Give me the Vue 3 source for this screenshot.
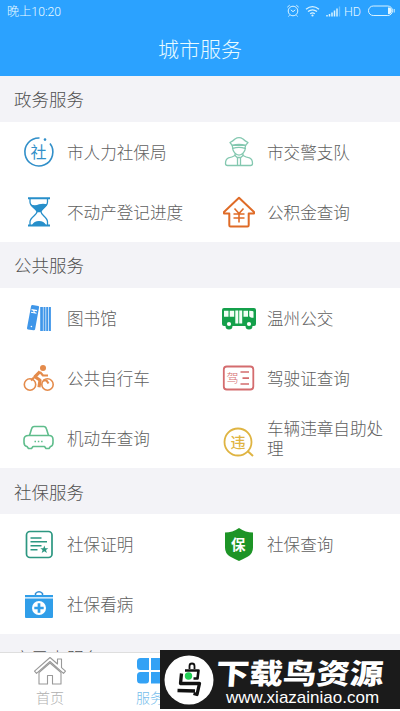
<script setup>
const sections = [
  { title: '政务服务', items: [
    { icon: 'social', label: '市人力社保局' },
    { icon: 'police', label: '市交警支队' },
    { icon: 'hourglass', label: '不动产登记进度' },
    { icon: 'fund', label: '公积金查询' }
  ] },
  { title: '公共服务', items: [
    { icon: 'books', label: '图书馆' },
    { icon: 'bus', label: '温州公交' },
    { icon: 'bike', label: '公共自行车' },
    { icon: 'license', label: '驾驶证查询' },
    { icon: 'car', label: '机动车查询' },
    { icon: 'violation', label: '车辆违章自助处理' }
  ] },
  { title: '社保服务', items: [
    { icon: 'cert', label: '社保证明' },
    { icon: 'shield', label: '社保查询' },
    { icon: 'kit', label: '社保看病' }
  ] },
  { title: '市民卡服务', items: [] }
]
</script>

<template>
  <div class="screen">
    <header class="top">
      <div class="status">
        <span>晚上10:20</span>
        <svg class="status-icons" width="110" height="16" viewBox="0 0 110 16" fill="none" stroke="#d9f3ff">
          <circle cx="7" cy="8" r="4.8" />
          <path d="M4.8 6.8 7 8.7l2.3-1.9M1.3 4.2l2.4-2M12.7 4.2l-2.4-2M3.5 12.3l-1 1.2M10.5 12.3l1 1.2" />
          <path d="M20 6.2q6.5-5.2 13 0M22 8.6q4.500-3.600 9 0M24.200 10.800q2.300-1.800 4.600 0" stroke-width="1.300" />
          <circle cx="26.500" cy="12.500" r="1.100" fill="#d9f3ff" stroke="none" />
          <path d="M41 13.500v-1.500M43.500 13.500v-2.500M46 13.500v-4M48.500 13.500v-6M51 13.500v-8" stroke-width="1.500" />
          <path d="M53.500 13.500v-10" stroke="#6bbfff" stroke-width="1.300" />
          <text x="58" y="12.500" class="hd">HD</text>
          <rect x="82.500" y="3" width="24" height="9.500" rx="4.700" />
          <path d="M102 4.500h1.500q2.300.5 2.300 3.300t-2.300 3.200H102z" fill="#e4f7ff" stroke="none" />
          <path d="M108.200 6v3.500" />
        </svg>
      </div>
      <h1>城市服务</h1>
    </header>

    <main>
      <section v-for="s in sections" :key="s.title">
        <h2>{{ s.title }}</h2>
        <div class="grid">
          <div v-for="it in s.items" :key="it.icon" class="item">
            <svg class="icon" width="40" height="40" viewBox="0 0 40 40" fill="none" stroke-linejoin="round">
              <g v-if="it.icon === 'social'" stroke="#318fc9">
                <path d="M20.500 6A14 14 0 1 0 31 11.500" stroke-width="1.600" />
                <circle cx="26" cy="7.600" r="1.300" fill="#318fc9" stroke="none" />
                <text x="19.500" y="26" class="glyph social">社</text>
              </g>
              <g v-else-if="it.icon === 'police'" stroke="#84c8b0" stroke-width="1.300">
                <path d="M13.200 13.300 11 10.500Q14 9 16 7q4-2.700 8 0 2 2 5 3.500l-2.400 2.800z" />
                <path d="M13.200 13.300q6.800-2 13.400 0l-.6 3q-6-2-12.200 0z" />
                <path d="M13.500 16q.500 3 2 4.600 4.500 5 9 0 1.500-1.600 2-4.600M16 21v3M24 21v3" />
                <path d="M16 23.500q-3 1.700-6.500 2.300Q6.500 27 6.500 31.500q0 2 2 2h23q2 0 2-2 0-4.500-3-5.700-3.500-.6-6.500-2.300M16 23.500l2.200 2h3.600l2.200-2M18.500 25.500v8M21.500 25.500v8" />
              </g>
              <g v-else-if="it.icon === 'hourglass'" stroke="#278fca">
                <path d="M9 6.200h22M9 33.500h22" stroke-width="2" />
                <path d="M11 7v3c0 5 7 6.500 7 9.800s-7 5.500-7 10V33M28.500 7v3c0 5-6.500 6.500-6.500 9.800s6.500 5.500 6.500 10V33" stroke-width="1.300" />
                <path d="M11.500 12.300q4.500 2 8.500 0 4-1.300 8.300 0c-1.300 3.700-6 4.700-6.500 8h-3.600c-.500-3.300-5.500-4.300-6.700-8zM13 33q2-4 7-4t7 4z" fill="#278fca" stroke="none" />
              </g>
              <g v-else-if="it.icon === 'fund'" stroke="#df6b27" stroke-width="2">
                <path d="M20 5.800 35 20v1.500h-5.300V33.300q0 1.200-1.200 1.200h-17q-1.200 0-1.200-1.200V21.500H5V20z" />
                <path d="m15.500 16.500 4.500 5 4.500-5M14.500 22h11M14.500 26h11M20 21.500V30.500" stroke-width="1.600" />
              </g>
              <g v-else-if="it.icon === 'books'" fill="#3f96e9">
                <path d="m13.500 7 5.800.9q1 .3.800 1.300l-4 22q-.3 1.300-1.500 1.100L9 31.400q-1.200-.3-1-1.500l4-21.500q.3-1.500 1.500-1.400zM21.200 9h2.700v24h-2.700zM24.500 9h2v24h-2zM27.200 9h2v24h-2zM29.900 9h2v24h-2z" />
                <path d="m12.500 11.600 5.500 1M12 14.300l5.500 1M14 12l2 3" stroke="#fff" stroke-width="1.100" />
                <circle cx="12.400" cy="28.500" r=".8" fill="#fff" />
              </g>
              <g v-else-if="it.icon === 'bus'">
                <path d="M5 10h30q2 0 2 2v14q0 2-2 2h-1.500a3.500 3.500 0 0 1-7 0h-13a3.500 3.500 0 0 1-7 0H5q-2 0-2-2V12q0-2 2-2z" fill="#14a04b" />
                <path d="M5 12.800h4.500v6H5zM10.700 12.800h4.500v6h-4.500zM24.500 12.800H29v6h-4.500zM30.200 12.800q4 0 4.300 1v6q-4 0-4.300-2zM16.300 12.500h3v13h-3zM20.200 12.500h3v13h-3z" fill="#f3fff7" />
                <circle cx="10" cy="26" r="3.600" fill="#14a04b" /><circle cx="30" cy="26" r="3.600" fill="#14a04b" />
                <circle cx="10" cy="26" r="2.100" fill="#fff" /><circle cx="30" cy="26" r="2.100" fill="#fff" />
              </g>
              <g v-else-if="it.icon === 'bike'" stroke="#e48b4b">
                <circle cx="11" cy="26.500" r="5.700" stroke-width="1.600" /><circle cx="28.500" cy="26.500" r="5.700" stroke-width="1.600" />
                <circle cx="24" cy="10" r="3" fill="#e48b4b" stroke="none" />
                <path d="m21 13.700-5 5 5 3.500-1 7" stroke-width="3.200" />
                <path d="m21 14 3 3.500h5M24 22.500h3.500l2 3M12 22.500l3-3" stroke-width="2.200" />
              </g>
              <g v-else-if="it.icon === 'license'" stroke="#d46c6e">
                <rect x="4.800" y="8.500" width="29.500" height="23" rx="3" stroke-width="1.800" />
                <text x="13.500" y="24.500" class="glyph drive">驾</text>
                <path d="M21.500 14H30M23.500 20.200H30M21.500 26H30" stroke-width="1.700" />
              </g>
              <g v-else-if="it.icon === 'car'" stroke="#5fbd8c" stroke-width="1.600">
                <path d="m10.500 17.500 2-6.500q.700-2.500 2.700-2.500h9.600q2 0 2.700 2.500l2 6.500" />
                <path d="M9.500 17.500h20.500q4 0 4 4v3q0 3.500-2.500 4l-1.500 2h-3l-1.500-2H14l-1.500 2h-3l-1.500-2Q5 28 5 24.500v-3q0-4 4.500-4z" />
                <path d="M15.500 23.500H17M18.800 23.500h1.500M22.100 23.500h1.500" stroke-width="1.500" />
              </g>
              <g v-else-if="it.icon === 'violation'" stroke="#dfb442">
                <circle cx="19" cy="24" r="13.500" stroke-width="1.800" />
                <path d="m28.500 33 5.500 5" stroke-width="2" />
                <text x="19" y="29.500" class="glyph breach">违</text>
              </g>
              <g v-else-if="it.icon === 'cert'" stroke="#2c9781">
                <rect x="7.500" y="7.500" width="25.500" height="26" rx="3.500" stroke-width="1.700" />
                <path d="M11.500 14h11M11.500 17.800H28M11.500 21.700h11M11.500 25.700h7" stroke-width="1.500" />
                <path d="m25.300 21.500 1 2.700h3l-2.300 1.800.9 3-2.600-1.800-2.600 1.800.9-3-2.300-1.800h3z" fill="#2c9781" stroke="none" />
              </g>
              <g v-else-if="it.icon === 'shield'">
                <path d="M20 4q6.500 4.500 14 4.500v15q0 6-5 9-4 2.200-9 4.500-5-2.300-9-4.500-5-3-5-9v-15Q13.500 8.500 20 4z" fill="#1d9426" />
                <text x="19.200" y="25.500" class="glyph protect">保</text>
              </g>
              <g v-else>
                <path d="M16.500 11V9.500q3.500-3.500 7 0V11" stroke="#318ed5" stroke-width="1.500" />
                <path d="M6 11h28v2.300H6zM6 14.500h28V33q0 1-1 1H7q-1 0-1-1z" fill="#309ee9" />
                <circle cx="20" cy="24" r="7" fill="#fff" />
                <path d="M20 19.300v9.400M15.300 24h9.400" stroke="#309ee9" stroke-width="2.700" />
              </g>
            </svg>
            <span class="label">{{ it.label }}</span>
          </div>
        </div>
      </section>
    </main>

    <nav>
      <div class="tab">
        <svg width="34" height="30" viewBox="0 0 34 30" fill="none" stroke="#999" stroke-width="1.100" stroke-linejoin="round">
          <path d="M17 1.500 1.500 15.200l2 2.200L17 5.500l13.500 11.900 2-2.200-4-3.600V3h-4v5z" />
          <path d="M6 16.500V28h8.500v-8.500h5V28H28V16.500L17 7z" />
        </svg>
        <span>首页</span>
      </div>
      <div class="tab active">
        <svg width="34" height="30" viewBox="0 0 34 30" fill="#33a2f5">
          <path d="M7.500 2H16v12H7.500Q4 14 4 10.500V5.500Q4 2 7.500 2zM18 2h8.500Q30 2 30 5.500v5q0 3.500-3.500 3.500H18zM7.500 16H16v8.500q0 3-3 3H7.500Q4 27.500 4 24v-4.500Q4 16 7.500 16zM18 16h8.500q3.500 0 3.500 3.500V24q0 3.500-3.500 3.500H18z" />
        </svg>
        <span>服务</span>
      </div>
    </nav>

    <aside class="banner">
      <svg width="50" height="50" viewBox="0 0 50 50" fill="none" stroke="#111">
        <circle cx="25" cy="25" r="24.500" fill="#fff" stroke="none" />
        <path d="M25.500 14v-3q0-2.500 2.500-2.500t2.500 2.500v3" stroke-width="1.800" />
        <path d="M21 15.500h13.500l-1 8h-4" stroke-width="2.600" stroke-linejoin="round" />
        <path d="M17.500 18.500 16.500 28.500H35.500L33 39.500l-3.500-1" stroke-width="3.300" stroke-linejoin="round" />
        <path d="M13.500 35.500 31 36" stroke-width="3.300" />
        <circle cx="24.500" cy="21" r="3.700" fill="#21ce55" stroke="none" />
      </svg>
      <div class="brand">
        <strong>下载鸟资源</strong>
        <span>www.xiazainiao.com</span>
      </div>
    </aside>
  </div>
</template>

<style>
body { margin: 0; background: #fff; }
</style>

<style scoped>
.screen {
  position: relative;
  display: flex;
  flex-direction: column;
  box-sizing: border-box;
  width: 400px;
  height: 711px;
  padding-bottom: 2px;
  overflow: hidden;
  background: #fff;
  color: #606060;
  font-family: "Noto Sans CJK SC", sans-serif;
  font-weight: 300;
}
.top { flex: none; height: 76px; background: #2ba2ff; color: #e9fbff; }
.status { display: flex; justify-content: space-between; align-items: center; height: 22px; padding: 0 4px 0 7px; font-family: Roboto, "Noto Sans CJK SC", sans-serif; font-size: 12.200px; }
.status-icons { display: block; }
.hd { font: 300 12.500px Roboto, sans-serif; fill: #e4f7ff; stroke: none; }
h1 { margin: 0; font-size: 21px; line-height: 53px; font-weight: 300; text-align: center; }
main { flex: 1; min-height: 0; overflow: hidden; }
h2 { margin: 0; padding-left: 14px; height: 46px; line-height: 46px; font-size: 17.500px; font-weight: 300; color: #505050; background: #f3f3f7; }
section:nth-child(n+3) h2 { line-height: 48px; }
.grid { display: grid; grid-template-columns: 200px 200px; grid-auto-rows: 60px; }
.item { display: flex; align-items: center; gap: 8px; padding: 0 12px 0 19px; }
.icon { flex: none; }
.label { font-size: 16.600px; line-height: 20px; }
.glyph { stroke: none; text-anchor: middle; }
.social { font-size: 16px; font-weight: 400; fill: #318fc9; }
.drive { font-size: 12px; fill: #d46c6e; }
.breach { font-size: 15px; font-weight: 500; fill: #dfb442; }
.protect { font-size: 14.500px; font-weight: 700; fill: #fff; }
nav { flex: none; display: grid; grid-template-columns: repeat(4, 100px); box-sizing: border-box; height: 57px; border-top: 1px solid #dedede; background: #fff; }
.tab { display: flex; flex-direction: column; align-items: center; padding-top: 3px; font-size: 14px; line-height: 20px; color: #b0b0b0; }
.tab svg { display: block; flex: none; }
.tab span { margin-top: 1px; }
.active { color: #75bdec; }
.banner { position: absolute; right: 0; bottom: 2px; display: flex; align-items: center; gap: 2px; box-sizing: border-box; width: 240px; height: 59px; padding-left: 4px; background: #1b1b1b; color: #fff; }
.brand { display: flex; flex-direction: column; align-items: flex-start; padding-top: 3px; }
.brand strong { font-size: 33.500px; line-height: 34px; font-weight: 900; transform: skewX(-4deg) scaleY(0.850); white-space: nowrap; }
.brand span { padding-left: 10px; font: 17px/18px "Liberation Sans", sans-serif; }
</style>
